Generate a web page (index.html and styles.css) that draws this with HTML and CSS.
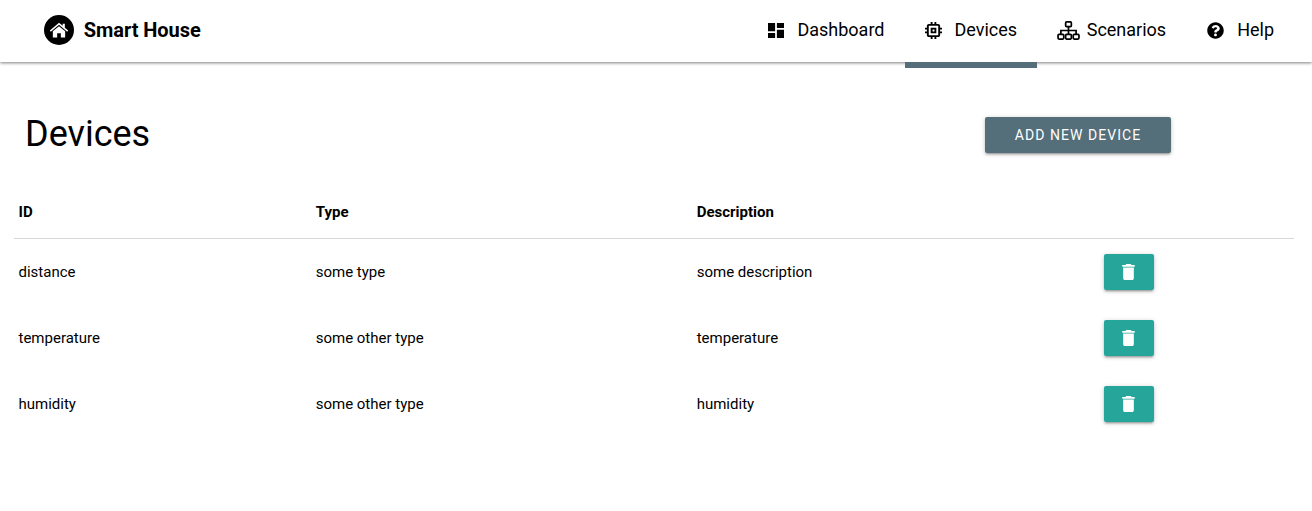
FILE: index.html
```html
<!DOCTYPE html>
<html lang="en">
<head>
<meta charset="utf-8">
<title>Smart House</title>
<link rel="stylesheet" href="styles.css">
</head>
<body>
<header class="topbar">
  <div class="brand">
    <span class="brand-logo">
      <svg viewBox="0 0 24 24" width="20" height="20"><path class="white" d="M12 3.200 1 12.600l1.200 1.400L12 5.700l9.800 8.300 1.200-1.400-4-3.400V4.600h-2.600v2.400z"/><path class="white" d="M12 7.400 4.600 13.600V21h5.200v-5h4.400v5h5.200v-7.400z"/></svg>
    </span>
    <span class="brand-name">Smart House</span>
  </div>
  <nav class="nav">
    <a class="nav-item nav-dashboard">
      <svg viewBox="3 3 18 18" width="16" height="15" preserveAspectRatio="none"><path d="M3 13h8V3H3v10zm0 8h8v-6H3v6zm10 0h8V11h-8v10zm0-18v6h8V3h-8z"/></svg>
      <span>Dashboard</span>
    </a>
    <a class="nav-item nav-devices active">
      <svg viewBox="3 3 18 18" width="17" height="17"><path d="M15 9H9v6h6V9zm-2 4h-2v-2h2v2zm8-2V9h-2V7c0-1.100-.9-2-2-2h-2V3h-2v2h-2V3H9v2H7c-1.100 0-2 .9-2 2v2H3v2h2v2H3v2h2v2c0 1.100.9 2 2 2h2v2h2v-2h2v2h2v-2h2c1.100 0 2-.9 2-2v-2h2v-2h-2v-2h2zm-4 6H7V7h10v10z"/></svg>
      <span>Devices</span>
    </a>
    <a class="nav-item nav-scenarios">
      <svg viewBox="0 0 24 20" width="23" height="19"><g class="outline"><rect x="9" y="1" width="6" height="5" rx="1"/><rect x="1" y="14" width="6" height="5" rx="1"/><rect x="9" y="14" width="6" height="5" rx="1"/><rect x="17" y="14" width="6" height="5" rx="1"/><path d="M12 6v8M4 14v-4h16v4"/></g></svg>
      <span>Scenarios</span>
    </a>
    <a class="nav-item nav-help">
      <svg viewBox="0 0 512 512" width="17" height="17"><path d="M504 256c0 137-111 248-248 248S8 393 8 256 119 8 256 8s248 111 248 248zM263 90c-54 0-89 23-116 64-4 5-3 12 3 16l35 26c5 4 13 3 17-2 18-23 30-36 58-36 21 0 46 13 46 33 0 15-12 23-33 34-23 13-55 30-55 72v7c0 7 5 12 12 12h56c7 0 12-5 12-12v-2c0-30 86-31 86-110 0-60-62-102-121-102zm-7 254c-24 0-44 20-44 44s20 44 44 44 44-20 44-44-20-44-44-44z"/></svg>
      <span>Help</span>
    </a>
  </nav>
</header>
<main class="content">
  <section class="page-head">
    <h1 class="page-title">Devices</h1>
    <button class="btn-add">Add new device</button>
  </section>
  <table class="devices">
    <thead>
      <tr><th class="col-id">ID</th><th class="col-type">Type</th><th class="col-desc">Description</th><th class="col-act"></th></tr>
    </thead>
    <tbody>
      <tr><td>distance</td><td>some type</td><td>some description</td><td><button class="btn-del" aria-label="Delete"><svg viewBox="5 3 14 18" width="13" height="16"><path class="white" d="M6 19c0 1.100.9 2 2 2h8c1.100 0 2-.9 2-2V7H6v12zM19 4h-3.500l-1-1h-5l-1 1H5v2h14V4z"/></svg></button></td></tr>
      <tr><td>temperature</td><td>some other type</td><td>temperature</td><td><button class="btn-del" aria-label="Delete"><svg viewBox="5 3 14 18" width="13" height="16"><path class="white" d="M6 19c0 1.100.9 2 2 2h8c1.100 0 2-.9 2-2V7H6v12zM19 4h-3.500l-1-1h-5l-1 1H5v2h14V4z"/></svg></button></td></tr>
      <tr><td>humidity</td><td>some other type</td><td>humidity</td><td><button class="btn-del" aria-label="Delete"><svg viewBox="5 3 14 18" width="13" height="16"><path class="white" d="M6 19c0 1.100.9 2 2 2h8c1.100 0 2-.9 2-2V7H6v12zM19 4h-3.500l-1-1h-5l-1 1H5v2h14V4z"/></svg></button></td></tr>
    </tbody>
  </table>
</main>
</body>
</html>
```
FILE: styles.css
```css
* { box-sizing: border-box; }
html, body { margin: 0; padding: 0; }
body {
  background: #fff;
  color: #000;
  font-family: Roboto, "Liberation Sans", sans-serif;
  height: 511px;
  overflow: hidden;
}
.white { fill: #fff; }
.topbar {
  height: 62px;
  display: flex;
  align-items: center;
  justify-content: space-between;
  padding-left: 44px;
  background: #fff;
  box-shadow: 0 1px 3px rgba(0, 0, 0, 0.5);
  position: relative;
}
.brand { display: flex; align-items: center; gap: 9.700px; padding-bottom: 2px; }
.brand-logo {
  width: 30px;
  height: 30px;
  border-radius: 50%;
  background: #000;
  display: flex;
  align-items: center;
  justify-content: center;
}
.brand-name { font-size: 20px; font-weight: 700; letter-spacing: -0.050px; }
.nav { display: flex; height: 62px; padding-right: 18px; }
.nav-item {
  display: flex;
  align-items: center;
  font-size: 18px;
  height: 62px;
  position: relative;
  padding: 0 20px 2px;
  gap: 14px;
}
.nav-item span { margin-bottom: 2px; }
.nav-item.active::after {
  content: "";
  position: absolute;
  left: 0;
  right: 0;
  top: 62px;
  height: 6px;
  background: #546e7a;
}
.nav-dashboard { gap: 13.500px; }
.nav-devices { gap: 13px; padding-right: 19.600px; }
.nav-scenarios { gap: 7px; }
.nav-help { gap: 13px; padding-left: 21px; }
.outline { fill: none; stroke: #000; stroke-width: 1.800; }
.content { padding: 0 18px 0 14px; }
.page-head {
  display: flex;
  align-items: center;
  justify-content: space-between;
  height: 36px;
  margin-top: 55px;
  padding: 0 123px 0 11px;
}
.page-title { font-size: 36px; font-weight: 400; margin: 0 0 2px; line-height: 36px; }
.btn-add {
  width: 186px;
  height: 36px;
  border: 0;
  border-radius: 2px;
  background: #546e7a;
  color: #fff;
  font-family: inherit;
  font-size: 14px;
  font-weight: 400;
  letter-spacing: 0.075em;
  text-transform: uppercase;
  box-shadow: 0 2px 2px rgba(0, 0, 0, 0.14), 0 3px 1px -2px rgba(0, 0, 0, 0.12), 0 1px 5px rgba(0, 0, 0, 0.2);
}
.devices { width: 1280px; border-collapse: collapse; table-layout: fixed; margin-top: 33px; }
.devices th {
  text-align: left;
  font-size: 15px;
  font-weight: 700;
  height: 52px;
  padding: 0 4.500px;
  border-bottom: 1px solid #d8d8d8;
}
.devices td { font-size: 15px; height: 66px; padding: 2px 4.500px 0; }
.col-id { width: 297.200px; }
.col-type { width: 381px; }
.col-desc { width: 407px; }
.btn-del {
  display: flex;
  align-items: center;
  justify-content: center;
  width: 50px;
  height: 36px;
  border: 0;
  border-radius: 2px;
  background: #26a69a;
  box-shadow: 0 2px 2px rgba(0, 0, 0, 0.14), 0 3px 1px -2px rgba(0, 0, 0, 0.12), 0 1px 5px rgba(0, 0, 0, 0.2);
  padding: 0;
}
```
